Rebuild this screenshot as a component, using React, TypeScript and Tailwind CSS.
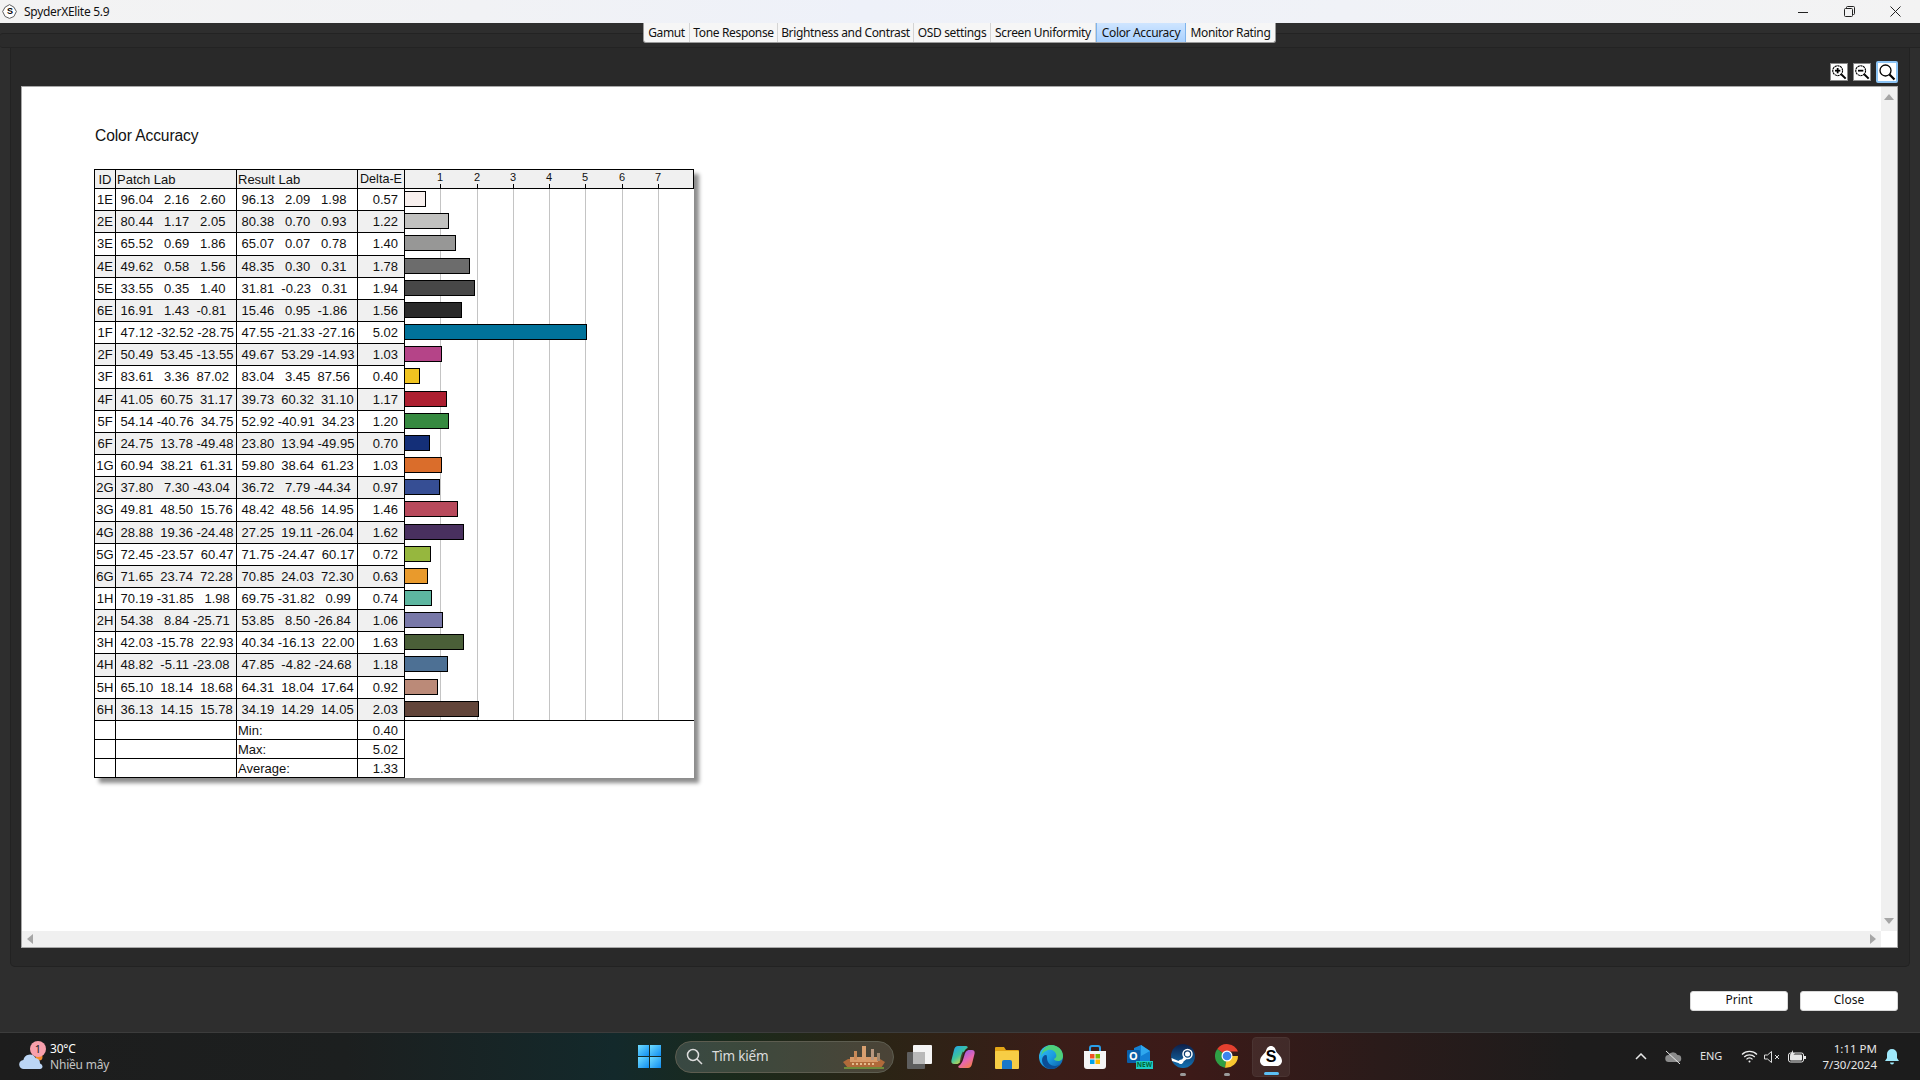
import React from "react";

type Row = [string, string, string, string, string, boolean?];

const rows: Row[] = [
  ["1E", "96.04 2.16 2.60", "96.13 2.09 1.98", "0.57", "#f8f0ee"],
  ["2E", "80.44 1.17 2.05", "80.38 0.70 0.93", "1.22", "#c2c2c0"],
  ["3E", "65.52 0.69 1.86", "65.07 0.07 0.78", "1.40", "#979796", true],
  ["4E", "49.62 0.58 1.56", "48.35 0.30 0.31", "1.78", "#6c6c6c"],
  ["5E", "33.55 0.35 1.40", "31.81 -0.23 0.31", "1.94", "#474747"],
  ["6E", "16.91 1.43 -0.81", "15.46 0.95 -1.86", "1.56", "#2a2a2a"],
  ["1F", "47.12 -32.52 -28.75", "47.55 -21.33 -27.16", "5.02", "#00729a"],
  ["2F", "50.49 53.45 -13.55", "49.67 53.29 -14.93", "1.03", "#b54488"],
  ["3F", "83.61 3.36 87.02", "83.04 3.45 87.56", "0.40", "#f0c420", true],
  ["4F", "41.05 60.75 31.17", "39.73 60.32 31.10", "1.17", "#ad1f30"],
  ["5F", "54.14 -40.76 34.75", "52.92 -40.91 34.23", "1.20", "#368a40"],
  ["6F", "24.75 13.78 -49.48", "23.80 13.94 -49.95", "0.70", "#142f78"],
  ["1G", "60.94 38.21 61.31", "59.80 38.64 61.23", "1.03", "#da6d2b"],
  ["2G", "37.80 7.30 -43.04", "36.72 7.79 -44.34", "0.97", "#364e94"],
  ["3G", "49.81 48.50 15.76", "48.42 48.56 14.95", "1.46", "#b84a5c", true],
  ["4G", "28.88 19.36 -24.48", "27.25 19.11 -26.04", "1.62", "#49305f"],
  ["5G", "72.45 -23.57 60.47", "71.75 -24.47 60.17", "0.72", "#96b73e"],
  ["6G", "71.65 23.74 72.28", "70.85 24.03 72.30", "0.63", "#e99a2c"],
  ["1H", "70.19 -31.85 1.98", "69.75 -31.82 0.99", "0.74", "#5db6a0"],
  ["2H", "54.38 8.84 -25.71", "53.85 8.50 -26.84", "1.06", "#7878a8"],
  ["3H", "42.03 -15.78 22.93", "40.34 -16.13 22.00", "1.63", "#4a5f38"],
  ["4H", "48.82 -5.11 -23.08", "47.85 -4.82 -24.68", "1.18", "#4d7094", true],
  ["5H", "65.10 18.14 18.68", "64.31 18.04 17.64", "0.92", "#bb8a78"],
  ["6H", "36.13 14.15 15.78", "34.19 14.29 14.05", "2.03", "#62453a"],
];

const lab = (s: string) =>
  s
    .split(" ")
    .map((v) => v.padStart(6, " "))
    .join(" ");

const ticks = [1, 2, 3, 4, 5, 6, 7];
const tickLeft = [35, 72, 108, 144, 180, 217, 253];

function Magnifier({ mode }: { mode: "plus" | "minus" | "none" }) {
  return (
    <svg width="18" height="18" viewBox="0 0 18 18" fill="none" stroke="#000">
      <circle cx="7.5" cy="7.5" r="5.5" strokeWidth="1.3" strokeDasharray={mode === "none" ? undefined : "2.5 0.6"} />
      <path d="M11.5 11.5L16.5 16.5" strokeWidth="2.2" />
      {mode !== "none" && <path d="M4.5 7.5h6" strokeWidth="2" />}
      {mode === "plus" && <path d="M7.5 4.5v6" strokeWidth="2" />}
    </svg>
  );
}

function Slot({ children, dot }: { children: React.ReactNode; dot?: boolean }) {
  return (
    <div className="relative flex h-full w-[44px] items-center justify-center">
      {children}
      {dot && <span className="absolute bottom-[4px] h-[3px] w-[6px] rounded-full bg-[#9a9a9a]" />}
    </div>
  );
}

export default function App() {
  return (
    <div className="flex h-[1080px] w-[1920px] flex-col overflow-hidden bg-[#2e2e2e] font-['Noto_Sans',sans-serif] text-black">
      {/* Title bar */}
      <div className="flex h-[23px] shrink-0 items-center bg-[linear-gradient(90deg,#f3f3f3_0%,#f1f2f5_25%,#eef1f9_45%,#f0f2f7_70%,#f3f3f3_100%)]">
        <div className="relative ml-[2px] flex h-[15px] w-[16px] items-center justify-center">
          <svg width="15" height="15" viewBox="0 0 24 24" className="absolute inset-0">
            <path d="M12 1l7 4 4 7-4 8-7 3-7-3-4-8 4-7z" fill="#fff" stroke="#555" strokeWidth="1.500" />
          </svg>
          <span className="relative text-[9px] font-bold leading-none text-black font-['Liberation_Sans',sans-serif]">S</span>
        </div>
        <span className="ml-[6px] text-[12px] tracking-[-0.3px] text-[#111]">SpyderXElite 5.9</span>
        <div className="ml-auto mr-[2px] flex h-full">
          <div className="flex w-[46px] items-center justify-center">
            <svg width="10" height="10" viewBox="0 0 10 10"><path d="M0 5.5h10" stroke="#222" /></svg>
          </div>
          <div className="flex w-[46px] items-center justify-center">
            <svg width="11" height="11" viewBox="0 0 11 11" fill="none" stroke="#222"><rect x="0.5" y="2.5" width="8" height="8" rx="1" /><path d="M2.5 2.5V1.5a1 1 0 0 1 1-1h6a1 1 0 0 1 1 1v6a1 1 0 0 1-1 1h-1" /></svg>
          </div>
          <div className="flex w-[46px] items-center justify-center">
            <svg width="11" height="11" viewBox="0 0 11 11" fill="none" stroke="#222"><path d="M0.5 0.5l10 10M10.5 0.5l-10 10" /></svg>
          </div>
        </div>
      </div>

      {/* App body */}
      <div className="flex min-h-0 flex-1 flex-col bg-[#2e2e2e]">
        <div className="relative shrink-0 pt-[10px]">
          <div className="h-[15px] rounded-l-[3px] border-y border-[#232323] bg-[#2b2b2b]" />
          <div className="absolute inset-x-0 top-0 flex justify-center">
            <div className="-ml-[1px] flex h-[20px] items-stretch overflow-hidden rounded-b-[3px] border-x border-b border-[#9a9a9a] bg-[#f6f6f6] text-[12px] leading-[18px] tracking-[-0.34px] text-[#111]">
              {[
                ["Gamut", "w-[46px]"],
                ["Tone Response", "w-[88px]"],
                ["Brightness and Contrast", "w-[136px]"],
                ["OSD settings", "w-[77px]"],
                ["Screen Uniformity", "w-[105px]"],
                ["Color Accuracy", "w-[90px]"],
                ["Monitor Rating", "w-[89px]"],
              ].map(([t, w]) =>
                t === "Color Accuracy" ? (
                  <div key={t} className={`flex items-center justify-center whitespace-nowrap border-x border-[#7fb4ec] bg-[linear-gradient(180deg,#cfe5ff_0%,#a9d1ff_100%)] ${w}`}>
                    {t}
                  </div>
                ) : (
                  <div key={t} className={`flex items-center justify-center whitespace-nowrap border-r border-[#d4d4d4] last:border-r-0 ${w}`}>
                    {t}
                  </div>
                )
              )}
            </div>
          </div>
        </div>

        {/* Report panel */}
        <div className="mx-[10px] flex h-[919px] shrink-0 flex-col rounded-b-[5px] border-x border-b border-[#222] bg-[#292929] pl-[10px] pr-[11px]">
          <div className="flex h-[38px] shrink-0 items-center justify-end gap-[5px] pt-[10px]">
            <div className="flex h-[18px] w-[18px] items-center justify-center border border-[#8a8a8a] bg-white">
              <Magnifier mode="plus" />
            </div>
            <div className="flex h-[18px] w-[18px] items-center justify-center border border-[#8a8a8a] bg-white">
              <Magnifier mode="minus" />
            </div>
            <div className="flex h-[22px] w-[22px] items-center justify-center rounded-[2px] border-2 border-[#8cc4f5] bg-white">
              <Magnifier mode="none" />
            </div>
          </div>

          <div className="flex h-[862px] shrink-0 flex-col border border-[#a8a8a8] bg-white">
            <div className="flex min-h-0 flex-1">
              <div className="flex-1 overflow-hidden pl-[72px] pt-[39px]">
                <div className="ml-[1px] h-[20px] text-[15.6px] leading-[20px] tracking-[-0.1px] text-[#111] font-['Liberation_Sans',sans-serif]">Color Accuracy</div>

                {/* Table */}
                <div className="mt-[23px] flex w-[600px] text-[13px] text-[#111] shadow-[5px_5px_4px_rgba(0,0,0,0.45)] font-['Liberation_Sans',sans-serif]">
                  <div className="w-[311px] shrink-0 border-l border-t border-black">
                    <div className="flex h-[19px] items-center border-b border-black bg-[#f0f0f0] leading-none">
                      <div className="flex h-full w-[21px] items-center justify-center border-r border-black">ID</div>
                      <div className="flex h-full w-[121px] items-center border-r border-black pl-[1px]">Patch Lab</div>
                      <div className="flex h-full w-[121px] items-center border-r border-black pl-[1px]">Result Lab</div>
                      <div className="flex h-full w-[47px] items-center justify-center border-r border-black text-[12.6px]">Delta-E</div>
                    </div>
                    {rows.map((r, i) => (
                      <div key={r[0]} className={`flex items-center border-b border-black leading-none ${r[5] ? "h-[23px]" : "h-[22px]"} ${i % 2 === 1 ? "bg-[#f0f0f0]" : "bg-white"}`}>
                        <div className="flex h-full w-[21px] items-center justify-center border-r border-black pb-[1px]">{r[0]}</div>
                        <div className="flex h-full w-[121px] items-center whitespace-pre border-r border-black pb-[1px] pl-[1px]">{lab(r[1])}</div>
                        <div className="flex h-full w-[121px] items-center whitespace-pre border-r border-black pb-[1px] pl-[1px]">{lab(r[2])}</div>
                        <div className="flex h-full w-[47px] items-center justify-end border-r border-black pb-[1px] pr-[6px]">{r[3]}</div>
                      </div>
                    ))}
                    {["Min:", "Max:", "Average:"].map((l, i) => (
                      <div key={l} className="flex h-[19px] items-center border-b border-black bg-white leading-none">
                        <div className="h-full w-[21px] border-r border-black" />
                        <div className="h-full w-[121px] border-r border-black" />
                        <div className="flex h-full w-[121px] items-center border-r border-black pl-[1px]">{l}</div>
                        <div className="flex h-full w-[47px] items-center justify-end border-r border-black pr-[6px]">{["0.40", "5.02", "1.33"][i]}</div>
                      </div>
                    ))}
                  </div>

                  {/* Chart */}
                  <div className="relative w-[289px] shrink-0 bg-white">
                    <div className="relative h-[20px] border-y border-r border-black bg-[#f0f0f0]">
                      {ticks.map((t, i) => (
                        <React.Fragment key={t}>
                          <span className="absolute top-[1px] w-[12px] -translate-x-1/2 text-center text-[11px] leading-[12px]" style={{ left: tickLeft[i] }}>
                            {t}
                          </span>
                          <span className="absolute bottom-0 h-[4px] w-px bg-black" style={{ left: tickLeft[i] }} />
                        </React.Fragment>
                      ))}
                    </div>
                    <div className="relative h-[532px] border-b border-black">
                      {ticks.map((t, i) => (
                        <span key={t} className="absolute inset-y-0 w-px bg-[#c4c4c4]" style={{ left: tickLeft[i] }} />
                      ))}
                      <div className="relative">
                        {rows.map((r) => (
                          <div key={r[0]} className={`flex items-start pt-[2px] ${r[5] ? "h-[23px]" : "h-[22px]"}`}>
                            <div className="h-[16px] border border-l-0 border-black" style={{ width: parseFloat(r[3]) * 36.3, background: r[4] }} />
                          </div>
                        ))}
                      </div>
                    </div>
                  </div>
                </div>
              </div>

              {/* Vertical scrollbar */}
              <div className="flex w-[16px] shrink-0 flex-col items-center justify-between bg-[#f0f0f0] py-[7px]">
                <svg width="10" height="6" viewBox="0 0 10 6"><path d="M5 0l5 6H0z" fill="#a6a6a6" /></svg>
                <svg width="10" height="6" viewBox="0 0 10 6"><path d="M0 0h10L5 6z" fill="#a6a6a6" /></svg>
              </div>
            </div>
            <div className="flex h-[16px] shrink-0">
              <div className="flex flex-1 items-center justify-between bg-[#f0f0f0] px-[5px]">
                <svg width="6" height="10" viewBox="0 0 6 10"><path d="M6 0v10L0 5z" fill="#a6a6a6" /></svg>
                <svg width="6" height="10" viewBox="0 0 6 10"><path d="M0 0v10l6-5z" fill="#a6a6a6" /></svg>
              </div>
              <div className="w-[16px] bg-white" />
            </div>
          </div>
        </div>

        {/* Buttons */}
        <div className="flex flex-1 items-start justify-end gap-[12px] pr-[22px] pt-[24px]">
          <button className="h-[20px] w-[98px] rounded-[3px] border border-[#d8d8d8] bg-white pb-[2px] text-[12px] leading-[16px] text-[#111]">Print</button>
          <button className="h-[20px] w-[98px] rounded-[3px] border border-[#d8d8d8] bg-white pb-[2px] text-[12px] leading-[16px] text-[#111]">Close</button>
        </div>
      </div>

      {/* Taskbar */}
      <div className="flex h-[48px] shrink-0 items-center border-t border-[#3c3c3c] bg-[linear-gradient(90deg,#1d1d1d_0%,#1c1f1f_18%,#13292b_32%,#1a2a1c_38%,#2b2415_46%,#3a1d18_55%,#3c1a18_62%,#2a1b1a_72%,#1d1c1c_82%,#1c1c1c_100%)]">
        {/* Weather */}
        <div className="flex h-full w-[628px] shrink-0 items-center pl-[19px]">
          <div className="relative h-[32px] w-[31px] shrink-0">
            <svg width="26" height="20" viewBox="0 0 26 20" className="absolute bottom-[2px] left-0">
              <circle cx="20" cy="6" r="3.5" fill="#f58a2c" />
              <path d="M5 18a4.5 4.5 0 0 1-.6-9A6.5 6.5 0 0 1 16.5 7a5.5 5.5 0 0 1 4.5 5.5c1.5.5 2.5 2 2.5 3 0 1.500-1 2.500-2.500 2.500z" fill="#bcd6f5" />
            </svg>
            <span className="absolute right-[4px] top-0 flex h-[16px] w-[16px] items-center justify-center rounded-full bg-[#f9a0ac] text-[11px] leading-none text-[#222]">1</span>
          </div>
          <div className="flex flex-col text-[12px] leading-[16px] tracking-[-0.2px]">
            <span className="text-white">30°C</span>
            <span className="text-[#c4c4c4]">Nhiều mây</span>
          </div>
        </div>

        {/* Start */}
        <div className="flex h-full w-[44px] shrink-0 items-center justify-center">
          <svg width="23" height="23" viewBox="0 0 23 23" className="-ml-[1px]">
            <defs>
              <linearGradient id="win" x1="0" y1="0" x2="1" y2="1">
                <stop offset="0" stopColor="#6fdcff" />
                <stop offset="1" stopColor="#0f8cf0" />
              </linearGradient>
            </defs>
            <rect x="0" y="0" width="11" height="11" fill="url(#win)" />
            <rect x="12" y="0" width="11" height="11" fill="url(#win)" />
            <rect x="0" y="12" width="11" height="11" fill="url(#win)" />
            <rect x="12" y="12" width="11" height="11" fill="url(#win)" />
          </svg>
        </div>

        {/* Search */}
        <div className="ml-[3px] flex h-[32px] w-[219px] shrink-0 items-center rounded-full border border-[#5d5d50] bg-[rgba(255,255,255,0.15)]">
          <svg width="17" height="17" viewBox="0 0 17 17" fill="none" stroke="#ddd" strokeWidth="1.5" className="ml-[10px]">
            <circle cx="7" cy="7" r="5.500" />
            <path d="M11 11l5 5" />
          </svg>
          <span className="ml-[9px] text-[13.5px] tracking-[-0.2px] text-[#dcdcdc]">Tìm kiếm</span>
          <svg width="44" height="28" viewBox="0 0 44 28" className="ml-auto mr-[7px]">
            <path d="M1 19l5-3h32l5 3-4 6H6z" fill="#b06a3a" />
            <rect x="8" y="14" width="28" height="5" fill="#d89a68" />
            <rect x="12" y="8" width="3" height="9" fill="#c98a58" />
            <rect x="20" y="3" width="4" height="14" fill="#d8a070" />
            <rect x="29" y="6" width="3" height="11" fill="#b89880" />
            <rect x="35" y="10" width="3" height="8" fill="#a08870" />
            <path d="M2 25h40" stroke="#6f8a3a" strokeWidth="2" />
            <path d="M10 21h24" stroke="#f2d8a8" strokeWidth="1.500" strokeDasharray="2 2" />
          </svg>
        </div>

        {/* Apps */}
        <div className="ml-[3px] flex h-full shrink-0 items-center">
          <Slot>
            <svg width="25" height="24" viewBox="0 0 25 24">
              <rect x="0" y="7" width="18" height="17" rx="1" fill="#5e5e5e" />
              <rect x="6" y="0" width="19" height="19" rx="1" fill="#f4f4f4" />
              <rect x="6" y="7" width="12" height="12" fill="#b9b9b9" />
            </svg>
          </Slot>
          <Slot>
            <svg width="24" height="22" viewBox="0 0 24 22">
              <defs>
                <linearGradient id="cpA" x1="0" y1="0" x2="0.7" y2="1">
                  <stop offset="0" stopColor="#1f9df0" />
                  <stop offset="0.55" stopColor="#3cc4a0" />
                  <stop offset="1" stopColor="#e8d83c" />
                </linearGradient>
                <linearGradient id="cpB" x1="0.2" y1="0" x2="0.8" y2="1">
                  <stop offset="0" stopColor="#8a5cf0" />
                  <stop offset="0.55" stopColor="#e866b0" />
                  <stop offset="1" stopColor="#f5803c" />
                </linearGradient>
              </defs>
              <path d="M7 0h8c1.500 0 2 1 1.500 2C13 4 12 8 10.500 13c-.7 2.500-2 5-5 5H3c-2 0-3-1.500-2.600-3.500L3 4c.6-2.500 2-4 4-4z" fill="url(#cpA)" />
              <path d="M17 22H9c-1.500 0-2-1-1.500-2 3.500-2 4.500-6 6-11 .7-2.500 2-5 5-5H21c2 0 3 1.500 2.600 3.500L21 18c-.6 2.500-2 4-4 4z" fill="url(#cpB)" />
              <path d="M12.500 6c-1.800 3-2.500 7-3 10" stroke="#2a1a14" strokeWidth="1.500" fill="none" opacity="0.7" />
            </svg>
          </Slot>
          <Slot>
            <svg width="24" height="24" viewBox="0 0 24 24">
              <path d="M0 3a1 1 0 0 1 1-1h8l2 3h12a1 1 0 0 1 1 1v4H0z" fill="#e3a516" />
              <rect x="0" y="6" width="24" height="18" rx="1" fill="#f7cd45" />
              <path d="M7 17a2 2 0 0 1 2-2h6a2 2 0 0 1 2 2v7H7z" fill="#1a78c8" />
            </svg>
          </Slot>
          <Slot>
            <svg width="24" height="24" viewBox="0 0 24 24">
              <defs>
                <linearGradient id="edge" x1="0" y1="0" x2="1" y2="1">
                  <stop offset="0" stopColor="#35c1f1" />
                  <stop offset="0.5" stopColor="#1b9de2" />
                  <stop offset="1" stopColor="#0c59a4" />
                </linearGradient>
              </defs>
              <circle cx="12" cy="12" r="12" fill="url(#edge)" />
              <path d="M12 0c7 0 12 5 12 11 0 3-2 5-5 5-2 0-4-1-4-2 2-1 3-3 2-5-1-3-4-5-8-4-3 1-6 3-7 6C3 5 7 0 12 0z" fill="#4ed07a" />
              <path d="M8 13c0 5 4 8 8 8 2 0 4-1 5-2-2 3-5 5-9 5-5 0-9-4-9-9 0-3 2-5 4-5 1 0 1 2 1 3z" fill="#0b4e96" />
            </svg>
          </Slot>
          <Slot>
            <svg width="24" height="24" viewBox="0 0 24 24">
              <path d="M7 6V3a2 2 0 0 1 2-2h6a2 2 0 0 1 2 2v3" fill="none" stroke="#2a9ee8" strokeWidth="2" />
              <path d="M1 6h22v15a3 3 0 0 1-3 3H4a3 3 0 0 1-3-3z" fill="#f5f5f5" />
              <rect x="7" y="9" width="4.500" height="4.500" fill="#f25022" />
              <rect x="12.500" y="9" width="4.500" height="4.500" fill="#7fba00" />
              <rect x="7" y="14.500" width="4.500" height="4.500" fill="#00a4ef" />
              <rect x="12.500" y="14.500" width="4.500" height="4.500" fill="#ffb900" />
            </svg>
          </Slot>
          <Slot>
            <div className="relative h-[24px] w-[24px]">
              <svg width="24" height="24" viewBox="0 0 24 24" className="absolute inset-0">
                <path d="M7 3l7-3 9 6v12H7z" fill="#1380d4" />
                <path d="M14 0l9 6-9 5z" fill="#2fa8ee" />
                <rect x="0" y="5" width="13" height="13" rx="1" fill="#0a5ea8" />
              </svg>
              <span className="absolute left-[2px] top-[4px] text-[11px] font-bold leading-[14px] text-white">O</span>
              <span className="absolute bottom-0 right-[-2px] bg-[#1ecbc4] px-[1px] text-[6.500px] font-bold leading-[8px] text-[#063]">NEW</span>
            </div>
          </Slot>
          <Slot dot>
            <svg width="24" height="24" viewBox="0 0 24 24" className="-mt-[1px]">
              <defs>
                <linearGradient id="steam" x1="0" y1="0" x2="0" y2="1">
                  <stop offset="0" stopColor="#0e1f48" />
                  <stop offset="1" stopColor="#1272b4" />
                </linearGradient>
              </defs>
              <circle cx="12" cy="12" r="12" fill="url(#steam)" />
              <path d="M0.500 14l7 3c1-1 2-1.500 3.500-1.500l3.500-5a1 1 0 0 0 3 3l-5 4c-.2 2.500-3.500 3.500-5 1.500L1 17z" fill="#fff" />
              <circle cx="16.500" cy="10" r="4.500" fill="none" stroke="#fff" strokeWidth="1.500" />
              <circle cx="16.500" cy="10" r="2.500" fill="#fff" />
            </svg>
          </Slot>
          <Slot dot>
            <svg width="24" height="24" viewBox="0 0 24 24" className="-mt-[1px]">
              <path d="M12 12L2.200 5A12 12 0 0 1 23 7.500H12z" fill="#e3402f" />
              <path d="M12 12L2.200 5A12 12 0 0 0 10 23.800z" fill="#2f9f45" />
              <path d="M12 12h11A12 12 0 0 1 10 23.800z" fill="#f8c630" />
              <circle cx="12" cy="12" r="5.500" fill="#fff" />
              <circle cx="12" cy="12" r="4.300" fill="#3d85ee" />
            </svg>
          </Slot>
          <div className="relative ml-[3px] flex h-[40px] w-[38px] items-center justify-center rounded-[4px] border border-[#4a3432] bg-[rgba(255,255,255,0.07)]">
            <div className="relative flex h-[20px] w-[24px] items-center justify-center -mt-[2px]">
              <svg width="24" height="20" viewBox="0 0 24 20" className="absolute inset-0">
                <path d="M12 0c3 0 4.500 2.500 5 5 .5 2 6 5 6 10 0 3-3 5-5 5H6c-2 0-5-2-5-5 0-5 5.500-8 6-10 .5-2.500 2-5 5-5z" fill="#fff" />
              </svg>
              <span className="relative mt-[3px] text-[16px] font-bold leading-none text-black font-['Liberation_Sans',sans-serif]">S</span>
            </div>
            <span className="absolute bottom-[1px] h-[3px] w-[15px] rounded-full bg-[#5cc0f5]" />
          </div>
        </div>

        {/* Tray */}
        <div className="ml-auto flex h-full w-[292px] shrink-0 items-center text-[12px] text-white">
          <div className="flex w-[26px] justify-center">
            <svg width="12" height="7" viewBox="0 0 12 7" fill="none" stroke="#e8e8e8" strokeWidth="1.500"><path d="M1 6l5-5 5 5" /></svg>
          </div>
          <div className="flex w-[38px] justify-center">
            <svg width="17" height="14" viewBox="0 0 17 14">
              <path d="M4 12a3.500 3.500 0 0 1-.5-7A5 5 0 0 1 12.500 5 3.500 3.500 0 0 1 13 12z" fill="#8c8c8c" />
              <path d="M1 1l14 13" stroke="#e8e8e8" strokeWidth="1" />
            </svg>
          </div>
          <div className="w-[38px] text-center text-[11px] tracking-[-0.1px] text-[#e4e4e4]">ENG</div>
          <div className="ml-[7px] flex w-[24px] justify-center">
            <svg width="17" height="13" viewBox="0 0 17 13" fill="none" stroke="#eee" strokeWidth="1.200">
              <path d="M1 4.500a10.500 10.500 0 0 1 15 0M3.200 7a7.500 7.500 0 0 1 10.600 0M5.500 9.300a4 4 0 0 1 6 0" />
              <circle cx="8.500" cy="11.500" r="1" fill="#eee" stroke="none" />
            </svg>
          </div>
          <div className="flex w-[22px] justify-center">
            <svg width="16" height="12" viewBox="0 0 16 12" fill="none" stroke="#ddd" strokeWidth="1">
              <path d="M0.500 4v4h3l4 3.500V0.500L3.500 4z" />
              <path d="M11 4l4 4M15 4l-4 4" />
            </svg>
          </div>
          <div className="flex w-[28px] justify-center">
            <svg width="18" height="13" viewBox="0 0 18 13">
              <rect x="0.500" y="3" width="15" height="9" rx="2" fill="none" stroke="#e8e8e8" />
              <rect x="2" y="4.500" width="12" height="6" rx="1" fill="#e8e8e8" />
              <rect x="16" y="6" width="2" height="3" fill="#e8e8e8" />
              <path d="M5 0L2 5h2l-1 3 4-5H5z" fill="#e8e8e8" />
            </svg>
          </div>
          <div className="flex flex-1 flex-col items-end text-[11.500px] leading-[16px] text-[#e8e8e8]">
            <span>1:11 PM</span>
            <span>7/30/2024</span>
          </div>
          <div className="mr-[13px] flex w-[30px] justify-center">
            <svg width="14" height="16" viewBox="0 0 14 16" fill="#9fe9fb">
              <path d="M7 0a5 5 0 0 1 5 5v4l2 3H0l2-3V5a5 5 0 0 1 5-5z" />
              <path d="M5 13.500h4a2 2 0 0 1-4 0z" />
            </svg>
          </div>
        </div>
      </div>
    </div>
  );
}
